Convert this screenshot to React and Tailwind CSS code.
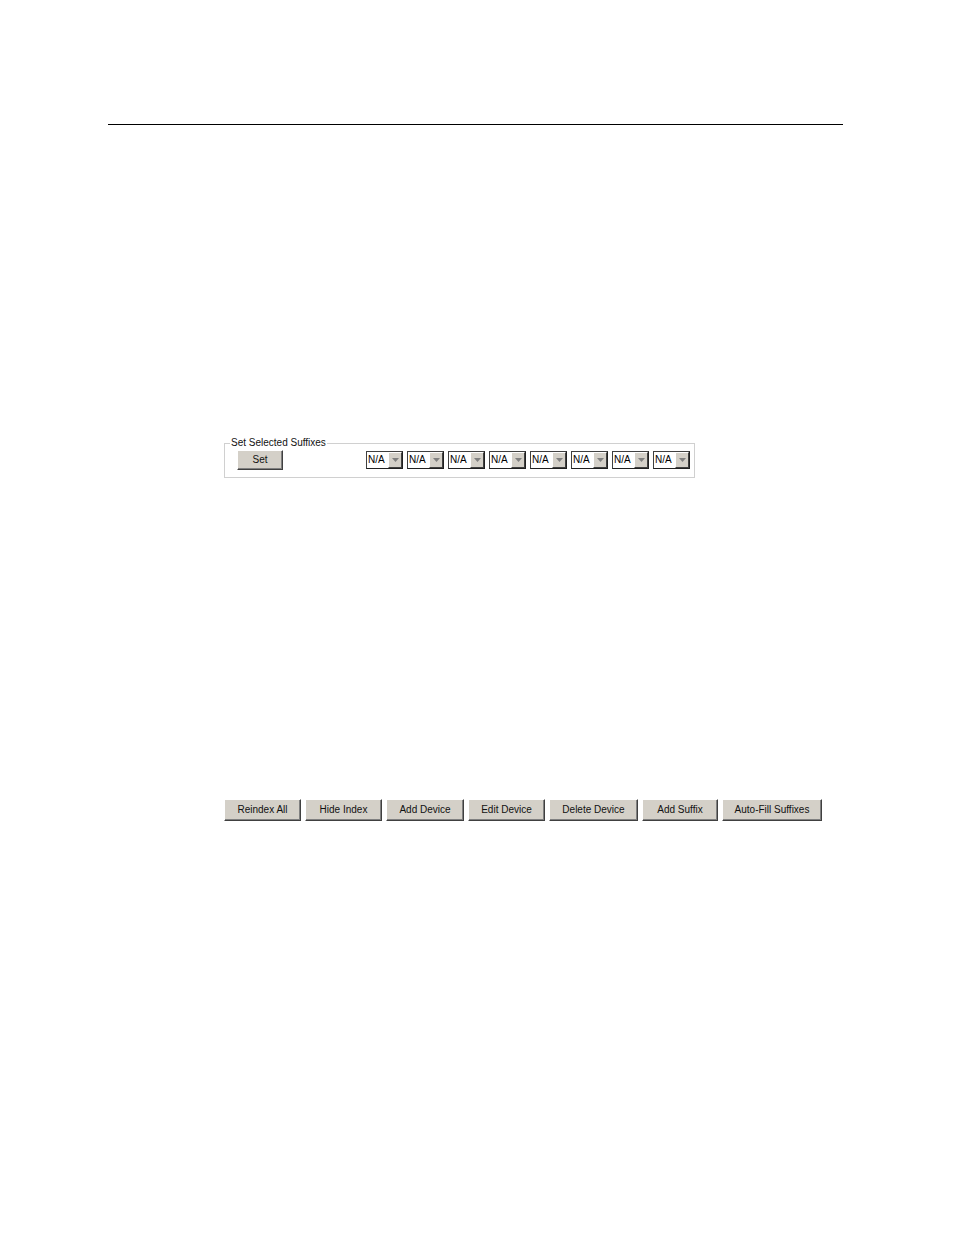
import { useState } from 'react';

const SUFFIX_SLOTS = 8;

const ACTIONS = [
  { label: 'Reindex All', w: 'w-[77px]' },
  { label: 'Hide Index', w: 'w-[77px]' },
  { label: 'Add Device', w: 'w-[78px]' },
  { label: 'Edit Device', w: 'w-[77px]' },
  { label: 'Delete Device', w: 'w-[89px]' },
  { label: 'Add Suffix', w: 'w-[76px]' },
  { label: 'Auto-Fill Suffixes', w: 'w-[100px]' },
];

// classic raised 3D button
function ClassicButton({ children, className = '' }) {
  return (
    <button
      type="button"
      className={`flex items-center justify-center bg-[#d4d0c8] border border-t-white border-l-white border-r-[#404040] border-b-[#404040] shadow-[inset_-1px_-1px_0_#808080] text-[10px] leading-none text-[#111] ${className}`}
    >
      {children}
    </button>
  );
}

function SuffixSelect({ value }) {
  return (
    <div className="flex h-[18px] w-[37px] border border-t-[#404040] border-l-[#404040] border-r-[#202020] border-b-[#202020] bg-white">
      <span className="flex-1 pl-[1px] text-[10px] leading-[16px] text-black">{value}</span>
      <span className="flex w-[14px] items-center justify-center bg-[#d4d0c8] border border-t-white border-l-white border-r-[#404040] border-b-[#404040]">
        <svg width="7" height="4" viewBox="0 0 7 4">
          <path d="M0 0h7L3.5 4z" fill="#808080" />
        </svg>
      </span>
    </div>
  );
}

export default function App() {
  const [suffixes] = useState(Array(SUFFIX_SLOTS).fill('N/A'));

  return (
    <div className="w-[954px] h-[1235px] bg-white font-['Liberation_Sans',Arial,sans-serif]">
      {/* page rule */}
      <div className="pt-[124px] pl-[108px]">
        <div className="w-[735px] border-t border-black" />
      </div>

      {/* suffix group box */}
      <div className="pl-[224px] pt-[312px]">
        <fieldset className="w-[471px] h-[41px] border border-[#d0d0d0] pl-[12px] pt-[1px]">
          <legend className="ml-[-7px] px-[1px] text-[10px] leading-[12px] text-[#111]">Set Selected Suffixes</legend>
          <div className="flex items-start">
            <ClassicButton className="w-[46px] h-[20px]">Set</ClassicButton>
            <div className="ml-[83px] mt-[1px] flex gap-[4px]">
              {suffixes.map((s, i) => (
                <SuffixSelect key={i} value={s} />
              ))}
            </div>
          </div>
        </fieldset>
      </div>

      {/* action buttons */}
      <div className="pl-[224px] pt-[321px] flex gap-[4px]">
        {ACTIONS.map((a) => (
          <ClassicButton key={a.label} className={`${a.w} h-[22px]`}>
            {a.label}
          </ClassicButton>
        ))}
      </div>
    </div>
  );
}
